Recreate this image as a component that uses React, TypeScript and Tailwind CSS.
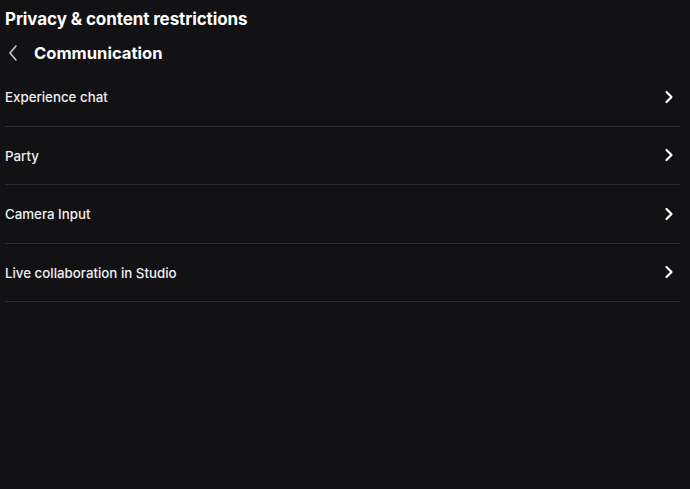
import { ChevronRight } from 'lucide-react';

const items = ['Experience chat', 'Party', 'Camera Input', 'Live collaboration in Studio'];

export default function App() {
  return (
    <div
      className="w-[690px] h-[489px] bg-[#121215] text-white overflow-hidden"
      style={{ fontFamily: 'Inter, "Noto Sans", sans-serif' }}
    >
      <div className="pl-[5px] pr-[10px]">
        <h1 className="h-[38px] pt-[1px] flex items-center text-[17px] font-bold tracking-[-0.1px]">
          Privacy &amp; content restrictions
        </h1>
        <div className="h-[30px] flex items-center">
          <svg width="14" height="18" viewBox="0 0 14 18" className="ml-[1px] mr-[14px]">
            <path d="M10 2 L4 9 L10 16" fill="none" stroke="#c8c8cc" strokeWidth="1.6" strokeLinecap="round" strokeLinejoin="round" />
          </svg>
          <h2 className="text-[16.6px] font-bold">Communication</h2>
        </div>
        <ul>
          {items.map((label) => (
            <li key={label} className="h-[58.5px] flex items-center justify-between border-b border-[#2c2c31]">
              <span className="pt-[3px] text-[13.3px] font-medium text-[#f0f0f2]">{label}</span>
              <ChevronRight className="mr-[1px]" size={20} strokeWidth={2.6} color="#ffffff" />
            </li>
          ))}
        </ul>
      </div>
    </div>
  );
}
